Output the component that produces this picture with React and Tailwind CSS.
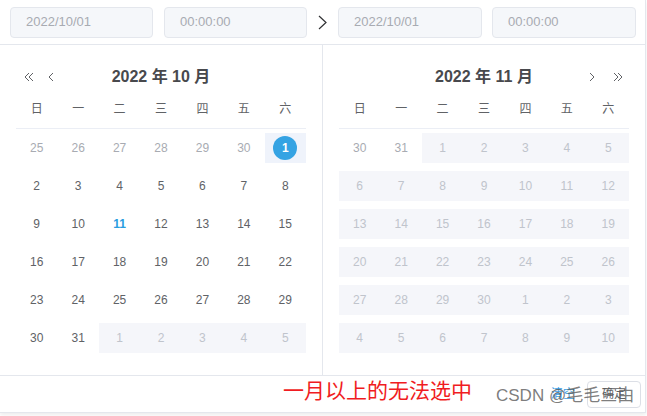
import React from 'react';

const FONT = { fontFamily: '"Liberation Sans", "Noto Sans CJK SC", sans-serif' };
const WEEK = ['日', '一', '二', '三', '四', '五', '六'];

// o = other month, d = disabled, s = selected, t = today
const OCT = [
  [['25', 'o'], ['26', 'o'], ['27', 'o'], ['28', 'o'], ['29', 'o'], ['30', 'o'], ['1', 's']],
  [['2'], ['3'], ['4'], ['5'], ['6'], ['7'], ['8']],
  [['9'], ['10'], ['11', 't'], ['12'], ['13'], ['14'], ['15']],
  [['16'], ['17'], ['18'], ['19'], ['20'], ['21'], ['22']],
  [['23'], ['24'], ['25'], ['26'], ['27'], ['28'], ['29']],
  [['30'], ['31'], ['1', 'd'], ['2', 'd'], ['3', 'd'], ['4', 'd'], ['5', 'd']],
];

const NOV = [
  [['30', 'o'], ['31', 'o'], ['1', 'd'], ['2', 'd'], ['3', 'd'], ['4', 'd'], ['5', 'd']],
  ...[
    ['6', '7', '8', '9', '10', '11', '12'],
    ['13', '14', '15', '16', '17', '18', '19'],
    ['20', '21', '22', '23', '24', '25', '26'],
    ['27', '28', '29', '30', '1', '2', '3'],
    ['4', '5', '6', '7', '8', '9', '10'],
  ].map(r => r.map(n => [n, 'd'])),
];

function Chevron({ dir = 'left', double = false }) {
  const w = double ? 10 : 6;
  const flip = dir === 'right' ? `scale(-1,1) translate(-${w},0)` : undefined;
  return (
    <svg width={w} height="10" viewBox={`0 0 ${w} 10`} fill="none" stroke="#606266" strokeWidth="1" className="block">
      <g transform={flip}>
        <path d="M5 1 L1 5 L5 9" />
        {double && <path d="M9 1 L5 5 L9 9" />}
      </g>
    </svg>
  );
}

function Cell({ n, kind }) {
  if (kind === 's') {
    return (
      <div className="h-[30px] flex items-center justify-center bg-[#eff3fb]">
        <span className="w-[24px] h-[24px] rounded-full bg-[#35a3e3] text-white font-bold flex items-center justify-center">{n}</span>
      </div>
    );
  }
  const cls =
    kind === 'd' ? 'bg-[#f5f6fa] text-[#c0c4cc]' :
    kind === 'o' ? 'text-[#a8abb2]' :
    kind === 't' ? 'text-[#2b9de0] font-bold' :
    'text-[#606266]';
  return <div className={`h-[30px] flex items-center justify-center ${cls}`}>{n}</div>;
}

function Month({ title, rows, left }) {
  return (
    <div className="px-[16px] pt-[16px]">
      <div className="h-[31px] flex items-center">
        <div className="w-[60px] flex items-center gap-[14px] pl-[8px]">
          {left && <Chevron double />}
          {left && <Chevron />}
        </div>
        <div className="flex-1 text-center text-[16px] font-semibold text-[#48494d]">{title}</div>
        <div className="w-[60px] flex items-center justify-end gap-[18px] pr-[6px]">
          {!left && <Chevron dir="right" />}
          {!left && <Chevron dir="right" double />}
        </div>
      </div>
      <div className="h-[37px] pb-[2px] grid grid-cols-7 items-center border-b border-[#ebeef5] text-[12px] text-[#606266]">
        {WEEK.map(w => <div key={w} className="text-center">{w}</div>)}
      </div>
      <div className="pt-[4px] flex flex-col gap-y-[8px] text-[12px]">
        {rows.map((r, i) => (
          <div key={i} className="grid grid-cols-7">
            {r.map(([n, k], j) => <Cell key={j} n={n} kind={k} />)}
          </div>
        ))}
      </div>
    </div>
  );
}

function Input({ value, w = 'w-[143px]' }) {
  return (
    <div className={`${w} h-[31px] rounded-[4px] border border-[#e4e7ed] bg-[#f5f7fa] pl-[15px] flex items-center text-[13px] text-[#a8abb2]`}>
      {value}
    </div>
  );
}

export default function App() {
  return (
    <div className="w-[647px] h-[416px] bg-white overflow-hidden" style={FONT}>
      <div className="w-[646px] h-[413px] border-r border-b border-[#e4e7ed] shadow-[0_2px_4px_rgba(0,0,0,0.08)] flex flex-col">
        <div className="h-[45px] shrink-0 border-b border-[#e4e7ed] flex items-center">
          <div className="w-[322px] flex items-center gap-[11px] pl-[10px]">
            <Input value="2022/10/01" />
            <Input value="00:00:00" />
          </div>
          <div className="w-[16px] flex justify-center -ml-[8px] mr-[8px]">
            <svg width="9" height="15" viewBox="0 0 9 15" fill="none" stroke="#303133" strokeWidth="1.2">
              <path d="M1 1 L8 7.5 L1 14" />
            </svg>
          </div>
          <div className="flex items-center gap-[10px]">
            <Input value="2022/10/01" w="w-[144px]" />
            <Input value="00:00:00" w="w-[144px]" />
          </div>
        </div>
        <div className="h-[330px] shrink-0 flex">
          <div className="w-[323px] border-r border-[#e4e7ed]">
            <Month title="2022 年 10 月" rows={OCT} left />
          </div>
          <div className="w-[322px]">
            <Month title="2022 年 11 月" rows={NOV} />
          </div>
        </div>
        <div className="relative flex-1 border-t border-[#e4e7ed] flex items-center justify-end pr-[4px]">
          <span className="absolute left-[283px] top-[1px] text-[21px] text-[#f01c22] leading-[28px] whitespace-nowrap">一月以上的无法选中</span>
          <span className="text-[12px] text-[#3a9ee6] mr-[12px]">清空</span>
          <div className="w-[54px] h-[27px] rounded-[4px] border border-[#dcdfe6] flex items-center justify-center text-[12px] text-[#606266]">确定</div>
          <span className="absolute left-[496px] top-[10px] text-[17px] text-[#5a5a5a]/80 leading-[20px] whitespace-nowrap">CSDN @毛毛三由</span>
        </div>
      </div>
    </div>
  );
}
